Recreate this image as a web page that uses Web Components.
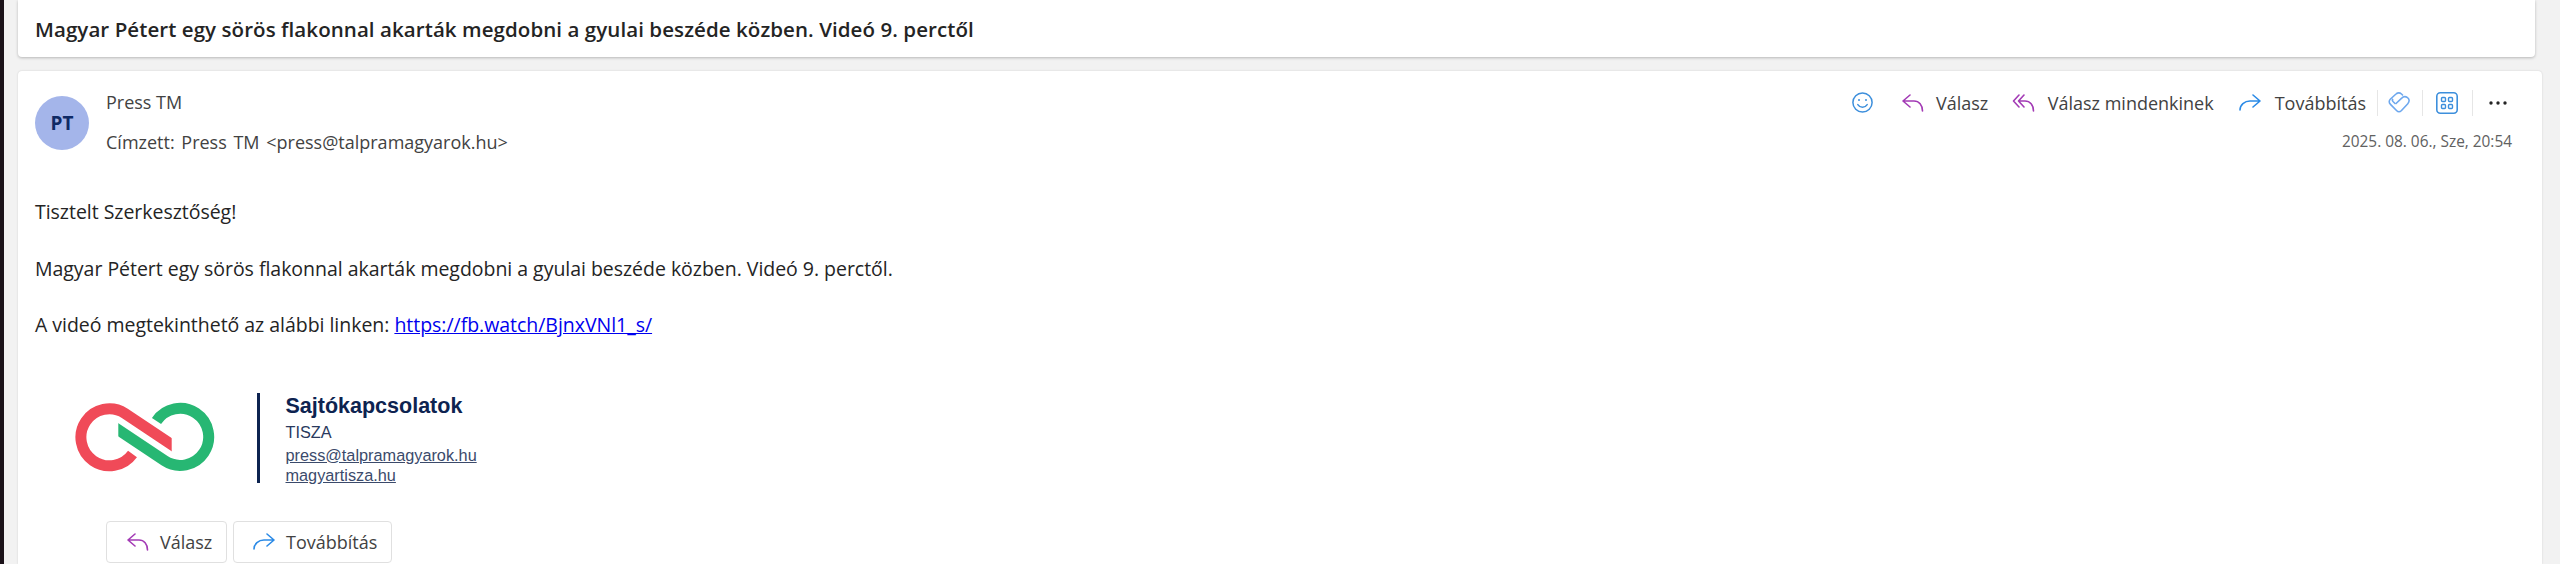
<!DOCTYPE html>
<html lang="hu"><head><meta charset="utf-8"><title>Levél</title>
<style>
html,body{margin:0;height:564px;overflow:hidden;background:#f2f2f2}
body{display:flex;font-family:"Open Sans","Noto Sans",sans-serif;color:#242424}
x-rail{flex:none}
x-main{flex:1;min-width:0}
</style></head><body>
<template id="t-rail"><style>:host{display:block;width:4px;height:564px;background:#1b1219}</style></template>
<template id="t-main"><style>:host{display:flex;flex-direction:column;gap:14px;padding:0 18px 0 14px;height:564px;box-sizing:border-box}</style><slot></slot></template>
<template id="t-subject"><style>:host{display:flex;align-items:center;height:57px;box-sizing:border-box;background:#fff;border-radius:0 0 4px 4px;padding:0 0 0 17px;margin-right:7px;box-shadow:0 1px 3px rgba(0,0,0,.25);font-size:20.5px;font-weight:600;letter-spacing:.07px;color:#242424;flex:none}</style><slot></slot></template>
<template id="t-card"><style>:host{display:block;background:#fff;border-radius:4px 4px 0 0;box-shadow:0 0 2px rgba(0,0,0,.16);flex:1;min-height:0;overflow:hidden;box-sizing:border-box;padding:25px 0 0 17px;position:relative}
.head{display:flex;height:55px}
.av{flex:none;width:54px;height:54px;border-radius:50%;background:#a4b5ea;color:#0f2a66;font-weight:700;font-size:19px;display:flex;align-items:center;justify-content:center}
.who{margin:-6px 0 0 17px;flex:none;font-size:18px;color:#424242}
.who div{line-height:24px}
.who .n{height:40px}
.who .r{word-spacing:2px}
.side{flex:1;display:flex;flex-direction:column;align-items:flex-end;padding-right:30px;margin-top:-11px}
.date{font-size:15.4px;color:#616161;margin-top:13px;line-height:18px}
.body{margin-top:47px;font-size:19.5px;letter-spacing:-.03px;line-height:28.3px;color:#242424}
.body p{margin:0 0 28.3px}
.body p:last-child{margin:0}
a{color:#0000ee;text-decoration:underline}
</style>
<div class="head"><div class="av">PT</div>
<div class="who"><div class="n">Press TM</div><div class="r">Címzett: Press TM &lt;press@talpramagyarok.hu&gt;</div></div>
<div class="side"><slot name="tools"></slot><div class="date">2025. 08. 06., Sze, 20:54</div></div></div>
<div class="body"><p>Tisztelt Szerkesztőség!</p>
<p>Magyar Pétert egy sörös flakonnal akarták megdobni a gyulai beszéde közben. Videó 9. perctől.</p>
<p>A videó megtekinthető az alábbi linken: <a href="#">https://fb.watch/BjnxVNl1_s/</a></p></div>
<slot name="sig"></slot><slot name="actions"></slot></template>
<template id="t-tools"><style>:host{display:flex;align-items:center;height:36px;font-size:18px;color:#424242}
svg{display:block;flex:none;fill:none}
.s{width:1px;height:26px;background:#e6e6e6;flex:none}
.t{flex:none;white-space:nowrap}
</style>
<svg width="21" height="21" viewBox="0 0 21 21" stroke="#3d8fdc" stroke-width="1.5"><circle cx="10.5" cy="10.5" r="9.6"/><circle cx="7" cy="8" r="1" fill="#3d8fdc" stroke="none"/><circle cx="14" cy="8" r="1" fill="#3d8fdc" stroke="none"/><path d="M5.8 12.6c2.2 3.4 7.2 3.4 9.4 0" stroke-linecap="round"/></svg>
<svg style="margin-left:28px" width="23" height="18" viewBox="0 0 23 18" stroke="#a33bb5" stroke-width="1.6" stroke-linecap="round" stroke-linejoin="round"><path d="M9 1 2 7l7 6M2 7h11c5 0 8.500 4 8.500 10"/></svg>
<span class="t" style="margin-left:12px">Válasz</span>
<svg style="margin-left:23.500px" width="23" height="18" viewBox="0 0 23 18" stroke="#a33bb5" stroke-width="1.6" stroke-linecap="round" stroke-linejoin="round"><path d="M7 1 1.500 7 7 13M12 1 6.500 7l5.500 6M6.500 7H13c5 0 8.500 4 8.500 10"/></svg>
<span class="t" style="margin-left:13px">Válasz mindenkinek</span>
<svg style="margin-left:25px" width="22" height="17" viewBox="0 0 22 17" stroke="#2b8ae6" stroke-width="1.6" stroke-linecap="round" stroke-linejoin="round"><path d="M14 1l7 6-7 6M21 7H11C5.500 7 1 11 1 16"/></svg>
<span class="t" style="margin-left:14px">Továbbítás</span>
<div class="s" style="margin-left:11px"></div>
<svg style="margin-left:10px" width="22" height="21" viewBox="0 0 22 21" stroke="#6ea8ee" stroke-width="1.6" stroke-linejoin="round"><path d="M8 2 2.500 7c-1.700 1.600-1.700 3.800 0 5.400L8.500 18.500c1.500 1.500 3.500 1.500 5 0l6.300-6.800c1.900-2.100 1.700-4.700-.3-6.100-2-1.400-4.300-1-5.800 .5L7.500 12"/><path d="M8 2c1.700-1.300 4-1.300 5.500 0l1.500 1.500M7.500 12 5 9.500c-.8-.9-.8-2 0-2.800"/></svg>
<div class="s" style="margin-left:12px"></div>
<svg style="margin-left:13px" width="22" height="22" viewBox="0 0 22 22" stroke="#3d8fdc" stroke-width="1.4"><rect x=".8" y=".8" width="20.400" height="20.400" rx="3.500" stroke-width="1.600"/><rect x="5.500" y="5.500" width="4" height="4" rx="1"/><rect x="12.500" y="5.500" width="4" height="4" rx="1"/><rect x="5.500" y="12.500" width="4" height="4" rx="1"/><rect x="12.500" y="12.500" width="4" height="4" rx="1"/></svg>
<div class="s" style="margin-left:14px"></div>
<svg style="margin-left:16px;margin-right:5px" width="18" height="4" viewBox="0 0 18 4"><circle cx="2" cy="2" r="1.700" fill="#242424"/><circle cx="9" cy="2" r="1.700" fill="#242424"/><circle cx="16" cy="2" r="1.700" fill="#242424"/></svg>
</template>
<template id="t-sig"><style>:host{display:flex;align-items:stretch;margin-top:53.500px;font-family:"Liberation Sans",Arial,sans-serif;color:#0d2350;height:90px;padding-left:25px}
svg{flex:none;display:block;margin-top:-3px}
.bar{width:3px;background:#0d2350;margin-left:17px;flex:none}
.tx{margin-left:25.500px;padding-top:1px}
.h{font-weight:700;font-size:21.5px;line-height:24px}
.o{font-size:16.300px;line-height:20px;margin-top:3.600px;color:#2a3a5e}
.l{margin-top:3px}
a{display:block;font-size:16.300px;line-height:20px;color:#3b4a6b;text-decoration:underline}
</style>
<svg width="180" height="100" viewBox="0 0 180 100" fill="none" stroke-width="11"><defs><clipPath id="a"><rect x="0" y="0" width="111.700" height="100"/></clipPath><clipPath id="b"><rect x="58.300" y="0" width="120" height="100"/></clipPath></defs><path clip-path="url(#a)" stroke="#f04a58" d="M72.500 64A28.500 28.500 0 1 1 64.800 23.300L125 63.500"/><path clip-path="url(#b)" stroke="#27b773" d="M96.500 31A28.500 28.500 0 1 1 104.500 70.700L45 31"/></svg>
<div class="bar"></div><div class="tx"><div class="h">Sajtókapcsolatok</div><div class="o">TISZA</div><div class="l"><a href="#">press@talpramagyarok.hu</a><a href="#">magyartisza.hu</a></div></div></template>
<template id="t-acts"><style>:host{display:flex;gap:6px;margin:38px 0 0 71px}
button{all:unset;box-sizing:border-box;display:flex;align-items:center;height:42px;border:1px solid #e0e0e0;border-radius:4px;background:#fff;padding-left:19px;font-family:"Open Sans",sans-serif;font-size:18px;color:#424242}
svg{fill:none;display:block;margin-right:11px}
</style>
<button style="width:121px"><svg width="23" height="18" viewBox="0 0 23 18" stroke="#a33bb5" stroke-width="1.600" stroke-linecap="round" stroke-linejoin="round"><path d="M9 1 2 7l7 6M2 7h11c5 0 8.500 4 8.500 10"/></svg>Válasz</button>
<button style="width:159px"><svg width="22" height="17" viewBox="0 0 22 17" stroke="#2b8ae6" stroke-width="1.600" stroke-linecap="round" stroke-linejoin="round"><path d="M14 1l7 6-7 6M21 7H11C5.500 7 1 11 1 16"/></svg>Továbbítás</button></template>
<x-rail></x-rail>
<x-main>
<x-subject>Magyar Pétert egy sörös flakonnal akarták megdobni a gyulai beszéde közben. Videó 9. perctől</x-subject>
<x-mail><x-tools slot="tools"></x-tools><x-sig slot="sig"></x-sig><x-acts slot="actions"></x-acts></x-mail>
</x-main>
<script>
for(const [n,t] of [['x-rail','t-rail'],['x-main','t-main'],['x-subject','t-subject'],['x-mail','t-card'],['x-tools','t-tools'],['x-sig','t-sig'],['x-acts','t-acts']]){
customElements.define(n,class extends HTMLElement{constructor(){super();this.attachShadow({mode:'open'}).append(document.getElementById(t).content.cloneNode(true))}})}
</script>
</body></html>
